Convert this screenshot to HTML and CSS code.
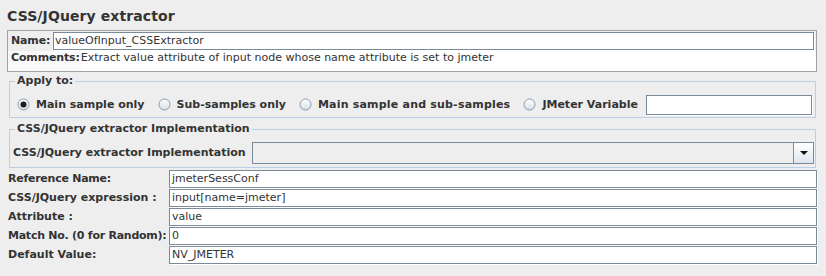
FILE: index.html
```html
<!DOCTYPE html>
<html>
<head>
<meta charset="utf-8">
<link rel="stylesheet" href="styles.css">
</head>
<body>
<div class="page">
  <div class="title">CSS/JQuery extractor</div>

  <div class="namebox">
    <div class="name-row">
      <span class="name-label">Name:</span>
      <div class="field name-field">valueOfInput_CSSExtractor</div>
    </div>
    <div class="comment-row">
      <span class="comment-label">Comments:</span>
      <div class="comment-text">Extract value attribute of input node whose name attribute is set to jmeter</div>
    </div>
  </div>

  <fieldset class="group">
    <legend>Apply to:</legend>
    <div class="radios">
      <span class="radio">
        <svg class="radio-icon" width="13" height="13" viewBox="0 0 13 13"><defs><linearGradient id="rg1" x1="0" y1="0" x2="0" y2="1"><stop offset="0" stop-color="#ffffff"/><stop offset="1" stop-color="#d5dfe9"/></linearGradient></defs><circle cx="6.5" cy="6.5" r="5.5" fill="url(#rg1)" stroke="#8b9aa8"/><circle cx="6.5" cy="6.5" r="3" fill="#1e1e1e"/></svg>
        <span class="radio-text">Main sample only</span>
      </span>
      <span class="radio">
        <svg class="radio-icon" width="13" height="13" viewBox="0 0 13 13"><defs><linearGradient id="rg2" x1="0" y1="0" x2="0" y2="1"><stop offset="0" stop-color="#ffffff"/><stop offset="1" stop-color="#d5dfe9"/></linearGradient></defs><circle cx="6.5" cy="6.5" r="5.5" fill="url(#rg2)" stroke="#8b9aa8"/></svg>
        <span class="radio-text">Sub-samples only</span>
      </span>
      <span class="radio">
        <svg class="radio-icon" width="13" height="13" viewBox="0 0 13 13"><defs><linearGradient id="rg3" x1="0" y1="0" x2="0" y2="1"><stop offset="0" stop-color="#ffffff"/><stop offset="1" stop-color="#d5dfe9"/></linearGradient></defs><circle cx="6.5" cy="6.5" r="5.5" fill="url(#rg3)" stroke="#8b9aa8"/></svg>
        <span class="radio-text wide">Main sample and sub-samples</span>
      </span>
      <span class="radio last">
        <svg class="radio-icon" width="13" height="13" viewBox="0 0 13 13"><defs><linearGradient id="rg4" x1="0" y1="0" x2="0" y2="1"><stop offset="0" stop-color="#ffffff"/><stop offset="1" stop-color="#d5dfe9"/></linearGradient></defs><circle cx="6.5" cy="6.5" r="5.5" fill="url(#rg4)" stroke="#8b9aa8"/></svg>
        <span class="radio-text">JMeter Variable</span>
      </span>
      <div class="field var-field"></div>
    </div>
  </fieldset>

  <fieldset class="group impl">
    <legend>CSS/JQuery extractor Implementation</legend>
    <div class="impl-row">
      <span class="impl-label">CSS/JQuery extractor Implementation</span>
      <div class="combo">
        <div class="combo-value"></div>
        <div class="combo-btn">
          <svg width="8" height="4" viewBox="0 0 8 4"><path d="M0 0 H8 L4 4 Z" fill="#111"/></svg>
        </div>
      </div>
    </div>
  </fieldset>

  <div class="form">
    <span class="form-label tight">Reference Name:</span>
    <div class="field row-field">jmeterSessConf</div>
    <span class="form-label">CSS/JQuery expression :</span>
    <div class="field row-field">input[name=jmeter]</div>
    <span class="form-label">Attribute :</span>
    <div class="field row-field">value</div>
    <span class="form-label tight">Match No. (0 for Random):</span>
    <div class="field row-field">0</div>
    <span class="form-label">Default Value:</span>
    <div class="field row-field">NV_JMETER</div>
  </div>
</div>
</body>
</html>
```

FILE: styles.css
```css
* {
  box-sizing: border-box;
}

html,
body {
  margin: 0;
  padding: 0;
}

body {
  width: 826px;
  height: 276px;
  overflow: hidden;
  background: #eeeeee;
  color: #333333;
  font-family: "DejaVu Sans", "Liberation Sans", sans-serif;
  font-size: 11px;
}

.page {
  padding: 0 9px 0 7px;
}

.title {
  margin: 7px 0 5px;
  font-size: 14px;
  line-height: 18px;
  font-weight: bold;
  letter-spacing: 0.1px;
}

/* Name / comments box */
.namebox {
  border: 1px solid #a3a3a3;
}

.name-row {
  display: flex;
  align-items: flex-start;
  height: 20px;
  padding: 1px 1px 0 3px;
}

.name-label {
  flex: none;
  width: 42px;
  font-weight: bold;
  line-height: 18px;
  letter-spacing: -0.15px;
}

.field {
  background: #ffffff;
  border: 1px solid #7a8a99;
  box-shadow: 1px 1px 0 #ffffff;
  white-space: nowrap;
  overflow: hidden;
}

.name-field {
  flex: 1;
  height: 18px;
  margin-right: 1px;
  padding-left: 1px;
  line-height: 16px;
}

.comment-row {
  display: flex;
  height: 20px;
  padding-left: 3px;
  line-height: 14px;
  background: #f9f9f9;
}

.comment-label {
  flex: none;
  font-weight: bold;
  letter-spacing: -0.15px;
  padding-right: 1px;
}

.comment-text {
  flex: 1;
  background: #ffffff;
  white-space: nowrap;
}

/* Titled groups */
.group {
  margin: 2px 1px 0 2px;
  padding: 6px 1px 2px 3px;
  border: 1px solid #b8cfe5;
  min-inline-size: 0;
}

.group legend {
  margin-left: 2px;
  padding: 0 2px;
  font-weight: bold;
  line-height: 14px;
}

.radios {
  display: flex;
  align-items: center;
  height: 21px;
  padding-left: 4px;
}

.radio {
  display: flex;
  align-items: center;
  margin-right: 13px;
}

.radio.last {
  margin-right: 8px;
}

.radio-icon {
  flex: none;
  display: block;
  margin-right: 6px;
}

.radio-text {
  font-weight: bold;
  line-height: 14px;
  white-space: nowrap;
}

.radio-text.wide {
  letter-spacing: 0.2px;
}

.var-field {
  flex: 1;
  height: 20px;
  margin-right: 2px;
}

.impl {
  margin-top: 4px;
  padding-bottom: 3px;
}

.impl-row {
  display: flex;
  align-items: center;
  height: 22px;
}

.impl-label {
  flex: none;
  font-weight: bold;
  line-height: 14px;
  margin-right: 6px;
  white-space: nowrap;
}

.combo {
  flex: 1;
  display: flex;
  height: 22px;
  border: 1px solid #7a8a99;
  background: #eeeeee;
}

.combo-value {
  flex: 1;
}

.combo-btn {
  flex: none;
  width: 20px;
  display: flex;
  align-items: center;
  justify-content: center;
  border-left: 1px solid #7a8a99;
  background: linear-gradient(#ffffff, #dce6f0);
}

.combo-btn svg {
  display: block;
}

/* Bottom form */
.form {
  display: grid;
  grid-template-columns: 162px 1fr;
  grid-auto-rows: 19px;
  margin-top: 2px;
}

.form-label {
  padding-left: 1px;
  font-weight: bold;
  line-height: 18px;
  white-space: nowrap;
}

.form-label.tight {
  letter-spacing: -0.25px;
}

.row-field {
  height: 18px;
  padding-left: 2px;
  line-height: 16px;
}
```
